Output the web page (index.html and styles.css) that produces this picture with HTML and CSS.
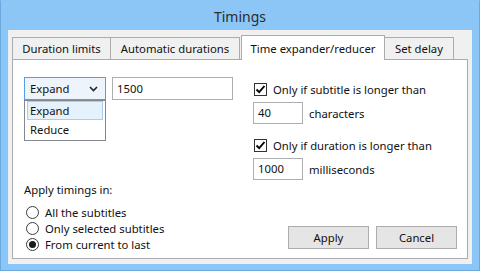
FILE: index.html
```html
<!DOCTYPE html>
<html>
<head>
  <title>Timings</title>
  <link rel="stylesheet" href="styles.css">
</head>
<body>
  <div class="window">
    <div class="titlebar">Timings</div>

    <div class="client">
      <div class="tabs">
        <div class="tab tab-limits">Duration limits</div>
        <div class="tab tab-auto">Automatic durations</div>
        <div class="tab tab-expander active">Time expander/reducer</div>
        <div class="tab tab-delay">Set delay</div>
      </div>

      <div class="panel">
        <div class="top-row">
          <div class="left-col">
            <div class="combo">
              <span>Expand</span>
              <svg class="chevron" width="9" height="6" viewBox="0 0 9 6">
                <path d="M1 1 L4.5 4.5 L8 1" fill="none" stroke="#222" stroke-width="1.6"/>
              </svg>
              <ul class="droplist">
                <li class="hover">Expand</li>
                <li>Reduce</li>
              </ul>
            </div>
            <div class="textbox amount">1500</div>
          </div>

          <div class="right-col">
            <div class="check-row first">
              <span class="checkbox">
                <svg width="11" height="11" viewBox="0 0 11 11">
                  <path d="M1.5 5.5 L4.2 8.2 L9.5 2" fill="none" stroke="#000" stroke-width="1.9"/>
                </svg>
              </span>
              <span>Only if subtitle is longer than</span>
            </div>
            <div class="field-row">
              <div class="textbox small">40</div>
              <span>characters</span>
            </div>

            <div class="check-row second">
              <span class="checkbox">
                <svg width="11" height="11" viewBox="0 0 11 11">
                  <path d="M1.5 5.5 L4.2 8.2 L9.5 2" fill="none" stroke="#000" stroke-width="1.9"/>
                </svg>
              </span>
              <span>Only if duration is longer than</span>
            </div>
            <div class="field-row last">
              <div class="textbox small">1000</div>
              <span>milliseconds</span>
            </div>
          </div>
        </div>

        <div class="bottom-row">
          <div class="apply-in">
            <div class="group-label">Apply timings in:</div>
            <div class="radio-row"><span class="radio"></span>All the subtitles</div>
            <div class="radio-row"><span class="radio"></span>Only selected subtitles</div>
            <div class="radio-row"><span class="radio on"></span>From current to last</div>
          </div>
          <div class="buttons">
            <div class="button">Apply</div>
            <div class="button">Cancel</div>
          </div>
        </div>
      </div>
    </div>
  </div>
</body>
</html>
```

FILE: styles.css
```css
body {
  margin: 0;
  padding: 0;
  font-family: "Segoe UI", "Noto Sans", sans-serif;
  font-size: 11.3px;
  color: #111;
}

.window {
  width: 480px;
  height: 271px;
  box-sizing: border-box;
  background-color: #8cc6f7;
  border: 1px solid #6aa9e0;
  border-top-color: #8cc6f7;
}

.titlebar {
  height: 29px;
  line-height: 31px;
  text-align: center;
  font-size: 14px;
  color: #2b2b2b;
}

.client {
  height: 234px;
  margin: 0 7px;
  padding: 5px 4px 0 4px;
  box-sizing: border-box;
  background-color: #f0f0f0;
  border-left: 1px solid #e6eef6;
}

/* tabs */
.tabs {
  display: flex;
  align-items: flex-end;
  height: 24px;
}

.tab {
  height: 22px;
  box-sizing: border-box;
  border: 1px solid #acacac;
  border-bottom: none;
  background-color: #f0f0f0;
  text-align: center;
  line-height: 22px;
}

.tab-limits { width: 99px; margin-left: -1px; }
.tab-auto { width: 130px; margin-left: -1px; }
.tab-expander { width: 144px; margin-left: 1px; }
.tab-delay { width: 70px; margin-left: -1px; }

.tab.active {
  height: 25px;
  margin-bottom: -1px;
  background-color: #fff;
  position: relative;
  z-index: 1;
  line-height: 25px;
}

/* panel */
.panel {
  position: relative;
  height: 200px;
  margin-left: -1px;
  box-sizing: border-box;
  border: 1px solid #acacac;
  background-color: #fff;
  padding: 17px 10px 6px 11px;
  display: flex;
  flex-direction: column;
}

.top-row {
  display: flex;
  align-items: flex-start;
}

.left-col {
  display: flex;
}

.combo {
  position: relative;
  width: 82px;
  height: 23px;
  box-sizing: border-box;
  border: 1px solid #569de5;
  background-color: #eef4fb;
  padding-left: 5px;
  line-height: 20px;
  display: flex;
  align-items: center;
  justify-content: space-between;
  padding-right: 7px;
}

.chevron {
  margin-top: 1px;
}

.droplist {
  position: absolute;
  left: -1px;
  top: 22px;
  width: 82px;
  height: 41px;
  box-sizing: border-box;
  margin: 0;
  padding: 0 2px;
  list-style: none;
  border: 1px solid #828790;
  background-color: #fff;
  z-index: 2;
}

.droplist li {
  height: 19px;
  line-height: 19px;
  padding-left: 3px;
  box-sizing: border-box;
}

.droplist li.hover {
  background-color: #e5f1fb;
  border: 1px solid #a9cdef;
  padding-left: 2px;
  line-height: 17px;
}

.textbox {
  height: 22px;
  box-sizing: border-box;
  border: 1px solid #abadb3;
  background-color: #fff;
  padding-left: 4px;
  line-height: 20px;
}

.amount {
  width: 121px;
  height: 23px;
  margin-left: 6px;
  line-height: 21px;
}

.right-col {
  margin-left: 20px;
}

.check-row {
  display: flex;
  align-items: center;
  padding-left: 1px;
}

.check-row.first { height: 24px; }
.check-row.second { height: 20px; margin-top: 11px; }

.checkbox {
  width: 13px;
  height: 13px;
  box-sizing: border-box;
  border: 1px solid #333;
  background-color: #fff;
  margin-right: 6px;
  display: flex;
  align-items: center;
  justify-content: center;
}

.field-row {
  display: flex;
  align-items: center;
  margin-top: 1px;
}

.field-row.last {
  margin-top: 3px;
}

.textbox.small {
  width: 50px;
  margin-right: 6px;
}

/* bottom */
.bottom-row {
  margin-top: auto;
  display: flex;
  justify-content: space-between;
  align-items: flex-end;
}

.group-label {
  height: 16px;
  line-height: 16px;
  margin-bottom: 6px;
  margin-top: 2px;
}

.radio-row {
  display: flex;
  align-items: center;
  height: 16px;
  padding-left: 2px;
}

.radio {
  width: 13px;
  height: 13px;
  box-sizing: border-box;
  border: 1px solid #3a3a3a;
  border-radius: 50%;
  background-color: #fff;
  margin-right: 6px;
  display: flex;
  align-items: center;
  justify-content: center;
}

.radio.on::after {
  content: "";
  width: 7px;
  height: 7px;
  border-radius: 50%;
  background-color: #1a1a1a;
}

.buttons {
  display: flex;
  gap: 7px;
  margin-bottom: 3px;
}

.button {
  width: 81px;
  height: 23px;
  box-sizing: border-box;
  border: 1px solid #acacac;
  background-color: #e5e5e5;
  text-align: center;
  line-height: 21px;
}
```
